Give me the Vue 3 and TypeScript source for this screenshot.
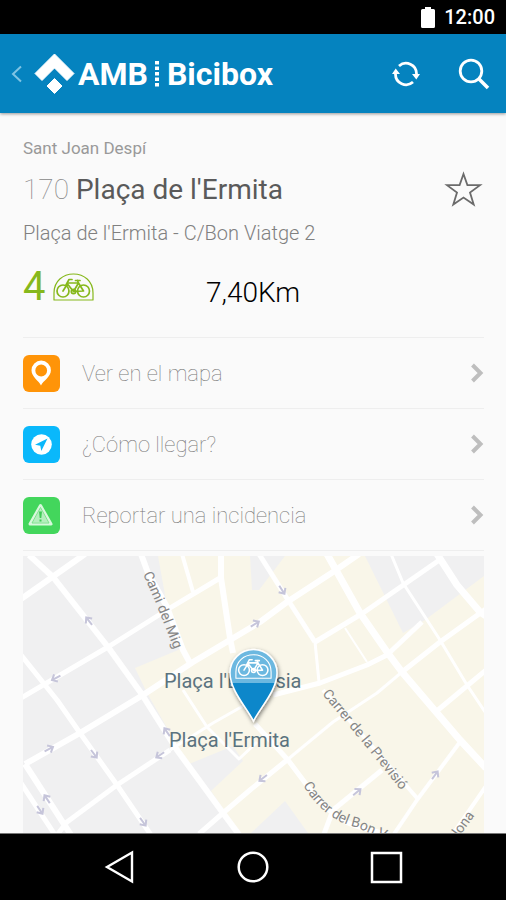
<script setup lang="ts">
interface Action {
  id: 'map' | 'route' | 'report'
  label: string
}

interface Arrow {
  x: number
  y: number
  angle: number
}

interface Road {
  d: string
  width: number
}

const actions: Action[] = [
  { id: 'map', label: 'Ver en el mapa' },
  { id: 'route', label: '¿Cómo llegar?' },
  { id: 'report', label: 'Reportar una incidencia' },
]

const roads: Road[] = [
  { d: 'M6 -1 L30 21 L85 91 L118 137 L154 194 L200 257 L217 280', width: 6 },
  { d: 'M-2 43 L62 -2', width: 6 },
  { d: 'M-2 142 L85 91 L147 52 L197 22', width: 5 },
  { d: 'M118 -2 L125 17 L144 51 L160 94 L167 107', width: 6 },
  { d: 'M159 -2 L170 36', width: 4 },
  { d: 'M198 -2 V22 L207 82 L210 97', width: 6 },
  { d: 'M2 208 L57 177 L120 139 L170 106 L237 66 L264 46 L310 16 L336 -2', width: 6 },
  { d: 'M236 -2 L265 44 L292 86', width: 5 },
  { d: 'M292 86 L296 126', width: 3 },
  { d: 'M304 -2 L337 57 L364 96 L379 116 L396 136 L437 184 L463 212', width: 7 },
  { d: 'M292 86 L340 57 L415 5', width: 5 },
  { d: 'M414 -2 L434 29 L457 56 L463 60', width: 7 },
  { d: 'M368 -2 L380 27 L417 84 L444 129 L462 156', width: 3 },
  { d: 'M399 66 L364 99 L344 109 L297 127 L250 139', width: 5 },
  { d: 'M322 72 L344 106', width: 2 },
  { d: 'M463 53 L417 86 L379 116', width: 5 },
  { d: 'M379 116 L354 137 L310 166 L264 204', width: 3 },
  { d: 'M264 204 L227 234 L200 257 L176 278', width: 5 },
  { d: 'M463 114 L415 154', width: 5 },
  { d: 'M232 168 L265 204 L283 228 Q310 266 340 272 L370 280', width: 5 },
  { d: 'M300 134 L394 242', width: 4 },
  { d: 'M437 186 L394 244 L371 278', width: 4 },
  { d: 'M359 214 L310 254 L301 278', width: 5 },
  { d: 'M463 230 L430 278', width: 4 },
  { d: 'M-2 99 L34 144 L57 177 L94 229 L128 279', width: 5 },
  { d: 'M2 208 L48 279', width: 6 },
  { d: 'M-2 227 L32 279', width: 5 },
  { d: 'M34 279 L44 266 L94 229 L147 194', width: 5 },
  { d: 'M147 194 L190 167 L220 150', width: 3 },
  { d: 'M160 134 L184 171 L216 203 L234 186', width: 3 },
]

const arrows: Arrow[] = [
  { x: 66, y: 65, angle: -128 },
  { x: 33, y: 122, angle: 152 },
  { x: 232, y: 68, angle: -32 },
  { x: 259, y: 34, angle: 57 },
  { x: 26, y: 193, angle: -28 },
  { x: 71, y: 198, angle: 53 },
  { x: 137, y: 199, angle: 146 },
  { x: 144, y: 176, angle: -125 },
  { x: 24, y: 243, angle: -124 },
  { x: 17, y: 254, angle: 56 },
  { x: 120, y: 266, angle: 54 },
  { x: 240, y: 222, angle: 142 },
  { x: 334, y: 236, angle: -40 },
  { x: 412, y: 219, angle: -54 },
]
</script>

<template>
  <div class="screen">
    <svg class="defs" aria-hidden="true">
      <symbol id="bike" viewBox="0 0 41 28">
        <g fill="none" stroke="currentColor" stroke-linecap="round" stroke-linejoin="round">
          <path d="M1 27 V20 C1 8 10 1 20.5 1 S40 8 40 20 V27 Z" stroke-width="1.2" />
          <circle cx="10" cy="18" r="6" stroke-width="1.7" />
          <circle cx="30.5" cy="18" r="6" stroke-width="1.7" />
          <path d="M10 18 L15 10 H25.5 L20.5 18.5 L14.5 11 M20.5 18.5 L30.5 18 L25.5 10 L24.5 7.5" stroke-width="1.7" />
          <path d="M13 12 L16 6.5 H19 M22.5 7.5 H27" stroke-width="1.7" />
          <circle cx="20.5" cy="18.5" r="2.2" stroke-width="1.7" />
        </g>
      </symbol>
    </svg>

    <div class="status">
      <svg width="14" height="21" viewBox="0 0 14 21" role="img" aria-label="Battery">
        <path d="M4 0 H10 V2 H12.5 Q14 2 14 3.5 V19.5 Q14 21 12.5 21 H1.5 Q0 21 0 19.5 V3.5 Q0 2 1.5 2 H4 Z" fill="#fff" />
      </svg>
      <time>12:00</time>
    </div>

    <header class="bar">
      <button class="back" type="button" aria-label="Atrás">
        <svg width="12" height="18" viewBox="0 0 12 18">
          <path d="M10 1.5 L2 9 L10 16.5" fill="none" stroke="#7fc4e4" stroke-width="2" />
        </svg>
      </button>
      <h1 class="brand">
        <svg width="41" height="41" viewBox="0 0 41 41" aria-hidden="true">
          <path d="M20.5 1 L40 20.5 L33 27.5 L20.5 15 L8 27.5 L1 20.5 Z M20.5 25.5 L28 33 L20.5 40.5 L13 33 Z" fill="#fff" stroke="#fff" stroke-width="1" stroke-linejoin="round" />
        </svg>
        <span>AMB</span>
        <svg class="dots" width="4" height="26" viewBox="0 0 4 26" aria-hidden="true">
          <path d="M2 0 V26" stroke="#fff" stroke-width="4" stroke-dasharray="3.5 2" />
        </svg>
        <span>Bicibox</span>
      </h1>
      <button class="tool" type="button" aria-label="Actualizar">
        <svg width="28" height="26" viewBox="0 0 28 26">
          <g fill="none" stroke="#fff" stroke-width="2.8">
            <path d="M7 5 A10.5 10.5 0 0 1 24.5 13" />
            <path d="M21 21 A10.5 10.5 0 0 1 3.5 13" />
          </g>
          <path d="M20 13 H28 L24.3 18.5 Z M0 13 H8 L3.7 7.5 Z" fill="#fff" />
        </svg>
      </button>
      <button class="tool" type="button" aria-label="Buscar">
        <svg width="32" height="32" viewBox="0 0 32 32">
          <circle cx="13" cy="13" r="10.8" fill="none" stroke="#fff" stroke-width="2.8" />
          <path d="M20.5 20.5 L30 30" stroke="#fff" stroke-width="3.6" />
        </svg>
      </button>
    </header>

    <main class="content">
      <p class="town">Sant Joan Despí</p>
      <div class="title-row">
        <h2><span class="number">170</span> Plaça de l'Ermita</h2>
        <button class="star" type="button" aria-label="Favorito">
          <svg width="40" height="38" viewBox="0 0 40 38">
            <path d="M19.5 3 L23.4 14 L36 14.2 L26 21.5 L29.7 33.5 L19.5 26.5 L9.3 33.5 L13 21.5 L3 14.2 L15.6 14 Z" fill="none" stroke="#6b6b6b" stroke-width="1.8" />
          </svg>
        </button>
      </div>
      <p class="address">Plaça de l'Ermita - C/Bon Viatge 2</p>
      <div class="facts">
        <div class="bikes">
          <span>4</span>
          <svg width="41" height="28" role="img" aria-label="Bicis"><use href="#bike" /></svg>
        </div>
        <span class="distance">7,40Km</span>
      </div>

      <ul class="actions">
        <li v-for="action in actions" :key="action.id">
          <a href="#">
            <svg class="tile" :class="action.id" width="37" height="37" viewBox="0 0 37 37" aria-hidden="true">
              <template v-if="action.id === 'map'">
                <path fill-rule="evenodd" d="M18 30.5 C16 26 8.5 22 8.5 15.3 A9.7 9.7 0 0 1 27.9 15.3 C27.9 22 20 26 18 30.5 Z M18.2 9.6 A5.9 5.9 0 1 0 18.2 21.4 A5.9 5.9 0 1 0 18.2 9.6 Z" fill="#fff" />
              </template>
              <template v-else-if="action.id === 'route'">
                <circle cx="18.5" cy="18.5" r="10.3" fill="#fff" />
                <path d="M24.5 12.5 L12 18.8 L17.3 19.7 L18.3 25 Z" fill="#0ab8fb" />
              </template>
              <template v-else>
                <path d="M17.5 8.5 L28 27 H7 Z" fill="#b4efbd" stroke="#d8f8dc" stroke-width="3" stroke-linejoin="round" />
                <path d="M17.5 10.5 L26 26 H9 Z" fill="none" stroke="#7be08a" stroke-width="1" />
                <path d="M16 14.5 H19 L18.3 21 H16.7 Z M16.5 22.5 H18.5 V24.5 H16.5 Z" fill="#3fcb57" />
              </template>
            </svg>
            <span>{{ action.label }}</span>
            <svg class="chevron" width="14" height="20" viewBox="0 0 14 20" aria-hidden="true">
              <path d="M2.5 2 L10.5 10 L2.5 18" fill="none" stroke="#bebebe" stroke-width="4" />
            </svg>
          </a>
        </li>
      </ul>

      <svg class="city" viewBox="0 0 461 277" preserveAspectRatio="xMidYMid slice" role="img" aria-label="Mapa">
        <defs>
          <path id="street-mig" d="M120 18 L134 50 L153 98" />
          <path id="street-previsio" d="M299 138 L339 186 L389 248" />
          <path id="street-bon" d="M280 229 Q300 263 332 271 L380 291" />
          <path id="street-lona" d="M436 281 L466 240" />
          <filter id="marker-shadow" x="-30%" y="-30%" width="170%" height="170%">
            <feDropShadow dx="1" dy="2" stdDeviation="2" flood-color="#000" flood-opacity="0.5" />
          </filter>
          <clipPath id="marker-top"><path d="M200 90 H262 V127 H200 Z" /></clipPath>
        </defs>

        <path d="M0 0 H461 V277 H0 Z" fill="#f0f0f1" />
        <path
          d="M135 0 L144 50 L160 92 L112 112 L124 137 L147 177 L166 208 L210 190 L220 205 L188 235 L217 277 H228 L262 245 L285 277 H461 V20 L402 64 L380 77 L342 0 H262 L236 34 L229 34 L227 0 Z"
          fill="#f9f6e9"
        />

        <g fill="none" stroke="#fff" stroke-linejoin="round">
          <path v-for="road in roads" :key="road.d" :d="road.d" :stroke-width="road.width" />
        </g>

        <g fill="none" stroke="#c6c5da" stroke-width="2">
          <path
            v-for="arrow in arrows"
            :key="`${arrow.x}-${arrow.y}`"
            d="M-5 0 H4 M0 -4 L4.5 0 L0 4"
            :transform="`translate(${arrow.x} ${arrow.y}) rotate(${arrow.angle})`"
          />
        </g>

        <g class="street">
          <text><textPath href="#street-mig">Cami del Mig</textPath></text>
          <text><textPath href="#street-previsio">Carrer de la Previsió</textPath></text>
          <text><textPath href="#street-bon">Carrer del Bon V</textPath></text>
          <text><textPath href="#street-lona">lona</textPath></text>
        </g>
        <g class="place">
          <text x="141" y="132">Plaça l'Església</text>
          <text x="146" y="191">Plaça l'Ermita</text>
        </g>

        <g filter="url(#marker-shadow)">
          <path d="M230.5 165 C224 152 207 134 207 117 A23.5 23.5 0 0 1 254 117 C254 134 237 152 230.5 165 Z" fill="#0a87ca" />
          <path d="M230.5 165 C224 152 207 134 207 117 A23.5 23.5 0 0 1 254 117 C254 134 237 152 230.5 165 Z" fill="#6cb8e0" clip-path="url(#marker-top)" />
          <path d="M230.5 165 C224 152 207 134 207 117 A23.5 23.5 0 0 1 254 117 C254 134 237 152 230.5 165 Z" fill="none" stroke="#fff" stroke-width="1.5" />
        </g>
        <use href="#bike" class="marker-bike" x="212" y="97" width="37" height="27" />
      </svg>
    </main>

    <nav class="nav" aria-label="Sistema">
      <button type="button" aria-label="Volver">
        <svg width="32" height="34" viewBox="0 0 32 34">
          <path d="M3 17 L28 2.5 V31.5 Z" fill="none" stroke="#fff" stroke-width="2.4" />
        </svg>
      </button>
      <button type="button" aria-label="Inicio">
        <svg width="34" height="34" viewBox="0 0 34 34">
          <circle cx="17" cy="17" r="14.3" fill="none" stroke="#fff" stroke-width="2.5" />
        </svg>
      </button>
      <button type="button" aria-label="Recientes">
        <svg width="34" height="34" viewBox="0 0 34 34">
          <path d="M3 3 H32 V32 H3 Z" fill="none" stroke="#fff" stroke-width="2.5" />
        </svg>
      </button>
    </nav>
  </div>
</template>

<style>
body {
  background: #fafafa;
}
</style>

<style scoped>
.screen {
  display: flex;
  flex-direction: column;
  height: 100vh;
  background: #fafafa;
  font-family: Roboto, "Liberation Sans", sans-serif;
  color: #555;
}

.defs {
  position: absolute;
  width: 0;
  height: 0;
}

svg {
  display: block;
  flex: none;
}

button {
  display: flex;
  align-items: center;
  justify-content: center;
  padding: 0;
  border: 0;
  background: none;
  cursor: pointer;
}

h1,
h2,
p,
ul {
  margin: 0;
  padding: 0;
  font-weight: 400;
}

.status {
  display: flex;
  flex: none;
  align-items: center;
  justify-content: flex-end;
  gap: 9px;
  height: 34px;
  padding-right: 11px;
  background: #000;
  color: #fff;
  font-size: 20px;
  font-weight: 500;
}

.bar {
  display: flex;
  flex: none;
  align-items: center;
  height: 79px;
  padding: 0 16px 0 11px;
  background: #0583bf;
  box-shadow: 0 1px 3px rgba(0, 0, 0, 0.4);
}

.back {
  margin-right: 11px;
}

.brand {
  display: flex;
  flex: 1;
  align-items: center;
  color: #fff;
  font-size: 32px;
  font-weight: 700;
  line-height: 40px;
}

.brand > span {
  margin-left: 3px;
}

.dots {
  margin: 0 5px 0 7px;
}

.tool + .tool {
  margin-left: 38px;
}

.content {
  display: flex;
  flex: 1;
  flex-direction: column;
  min-height: 0;
  padding: 24px 22px 0 23px;
}

.town {
  color: #999;
  font-size: 17px;
  line-height: 22px;
}

.title-row {
  display: flex;
  align-items: center;
  justify-content: space-between;
  margin-top: 12px;
}

.title-row h2 {
  color: #5a5a5a;
  font-size: 28px;
  line-height: 38px;
}

.number {
  color: #888;
  font-weight: 100;
}

.address {
  margin-top: 12px;
  color: #808080;
  font-size: 20px;
  font-weight: 300;
  line-height: 24px;
}

.facts {
  display: grid;
  grid-template-columns: 183px 1fr;
  align-items: center;
  margin-top: 22px;
  height: 48px;
}

.bikes {
  display: flex;
  align-items: center;
  gap: 8px;
  margin-bottom: 12px;
  color: #86b81c;
  font-size: 40px;
  line-height: 40px;
}

.distance {
  color: #000;
  font-size: 28px;
  font-weight: 300;
  line-height: 32px;
}

.actions {
  margin-top: 22px;
  list-style: none;
}

.actions li {
  border-top: 1px solid #eee;
}

.actions li:last-child {
  border-bottom: 1px solid #eee;
}

.actions a {
  display: flex;
  align-items: center;
  height: 70px;
  color: #777;
  font-size: 22px;
  font-weight: 100;
  text-decoration: none;
}

.actions span {
  flex: 1;
  margin-left: 22px;
}

.tile {
  border-radius: 6px;
}

.tile.map {
  background: #ff9408;
}

.tile.route {
  background: #0ab8fb;
}

.tile.report {
  background: #43d65c;
}

.city {
  flex: 1;
  width: 100%;
  min-height: 0;
  margin-top: 5px;
}

.street {
  fill: #858585;
  font-size: 14px;
}

.place {
  fill: #5b737f;
  font-size: 20px;
}

.marker-bike {
  color: #fff;
}

.nav {
  display: grid;
  flex: none;
  grid-template-columns: repeat(3, 1fr);
  height: 66px;
  padding: 0 53px;
  border-top: 1px solid #777;
  background: #000;
}
</style>
